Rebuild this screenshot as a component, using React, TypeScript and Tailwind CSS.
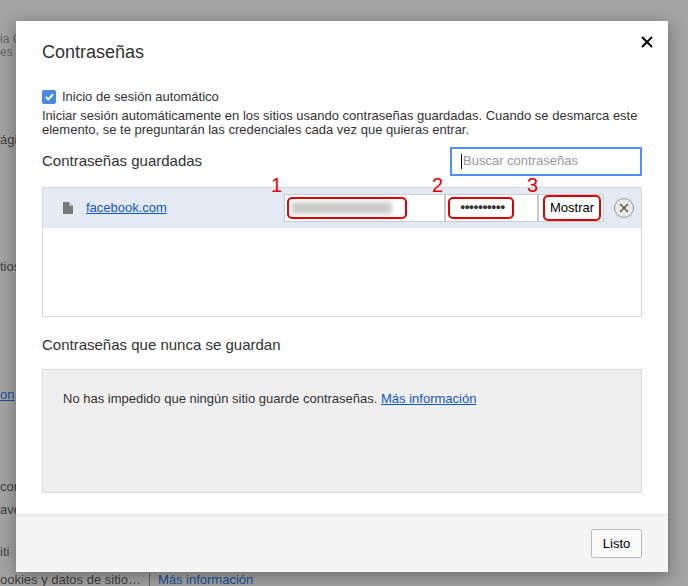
import { X } from "lucide-react";

export default function App() {
  return (
    <div className="relative h-[586px] w-[688px] overflow-hidden bg-[#a3a3a3] text-[13px] text-[#333]" style={{ fontFamily: '"Liberation Sans", Arial, sans-serif' }}>
      {/* page text behind the overlay */}
      <div className="absolute left-0 top-[33px] text-[#333]/60 leading-[13px] text-[12px]">ia C<br />es r</div>
      <div className="absolute left-0 top-[130px] text-[#222]/80">ági</div>
      <div className="absolute left-0 top-[257px] text-[#222]/80">tios</div>
      <div className="absolute left-0 top-[385px] text-[#1a4f9a] underline">on</div>
      <div className="absolute left-0 top-[477px] text-[#222]/80">cor</div>
      <div className="absolute left-0 top-[500px] text-[#222]/80">ave</div>
      <div className="absolute left-0 top-[542px] text-[#222]/80">iti</div>
      <div className="absolute left-0 top-[573px] flex gap-2 leading-[13px] text-[#222]/80">
        <span>ookies y datos de sitio…</span><span className="border-l border-[#666] pl-2 text-[#1a4f9a]">Más información</span>
      </div>

      <div className="absolute left-4 top-[21px] flex h-[551px] w-[652px] flex-col bg-white shadow-[0_4px_16px_rgba(0,0,0,0.35)]">
        <div className="relative px-[26px] pt-[18px]">
          <h1 className="text-[18px] text-[#333]">Contraseñas</h1>
          <button className="absolute right-[12px] top-[12px] text-black"><X size={18} strokeWidth={2.5} /></button>
        </div>
        <div className="px-[26px] pt-[21px]">
          <label className="flex items-center gap-[6px]">
            <span className="flex h-[14px] w-[14px] items-center justify-center rounded-[2px] bg-[#4a8be0]">
              <svg viewBox="0 0 12 12" className="h-[11px] w-[11px]"><path d="M2 6.5l2.7 2.7L10 3.5" fill="none" stroke="white" strokeWidth="2" /></svg>
            </span>
            <span>Inicio de sesión automático</span>
          </label>
          <p className="mt-[2px] leading-[14px]">Iniciar sesión automáticamente en los sitios usando contraseñas guardadas. Cuando se desmarca este elemento, se te preguntarán las credenciales cada vez que quieras entrar.</p>
          <div className="mt-[10px] flex items-center justify-between">
            <h2 className="text-[15px]">Contraseñas guardadas</h2>
            <div className="flex h-[29px] w-[192px] items-center border-2 border-[#4d90fe] px-[9px] text-[#999]">
              <span className="mr-[1px] h-[15px] w-px bg-black" />Buscar contraseñas
            </div>
          </div>
          <div className="mt-[11px] h-[130px] border border-[#d9d9d9]">
            <div className="relative flex h-[40px] items-center bg-[#e3eaf4]">
              <svg viewBox="0 0 10 12" className="ml-[20px] h-[12px] w-[10px]"><path d="M0 0h6l4 4v8H0z" fill="#777" /><path d="M6 0v4h4" fill="#bbb" /></svg>
              <a className="ml-[13px] text-[#1155cc] underline">facebook.com</a>
              <div className="ml-auto flex h-[28px] items-center">
                <div className="relative h-[28px] w-[161px] border border-[#ccc] bg-white">
                  <div className="absolute left-[2px] top-[2px] h-[22px] w-[120px] rounded-[5px] border-2 border-[#e00000] bg-white">
                    <div className="m-[3px] h-[12px] w-[100px] bg-[#ccc] blur-[2px]" />
                  </div>
                  <span className="absolute -left-[14px] -top-[25px] text-[20px] text-[#e00000]">1</span>
                </div>
                <div className="relative h-[28px] w-[93px] border border-[#ccc] bg-white">
                  <div className="absolute left-[2px] top-[2px] flex h-[22px] w-[66px] items-center rounded-[5px] border-2 border-[#e00000] pl-[10px] text-[9px] tracking-[-1px]">●●●●●●●●●●</div>
                  <span className="absolute -left-[14px] -top-[25px] text-[20px] text-[#e00000]">2</span>
                </div>
                <div className="relative flex h-[28px] w-[66px] items-center border border-[#ccc] bg-white">
                  <div className="ml-[4px] flex h-[26px] w-[58px] items-center justify-center rounded-[5px] border-2 border-[#e00000] text-black">Mostrar</div>
                  <span className="absolute -left-[12px] -top-[25px] text-[20px] text-[#e00000]">3</span>
                </div>
              </div>
              <div className="ml-[10px] mr-[7px] flex h-[20px] w-[20px] items-center justify-center rounded-full border border-[#999] bg-[#e8e8e8] text-[#555]">
                <X size={14} strokeWidth={2.5} />
              </div>
            </div>
          </div>
          <h2 className="mt-[17px] text-[15px]">Contraseñas que nunca se guardan</h2>
          <div className="mt-[13px] h-[124px] border border-[#d9d9d9] bg-[#efefef] px-[20px] pt-[19px]">
            No has impedido que ningún sitio guarde contraseñas. <a className="text-[#1155cc] underline">Más información</a>
          </div>
        </div>
        <div className="mt-[21px] flex flex-1 items-start justify-end border-t border-[#e5e5e5] bg-[#f5f5f5] px-[26px] pt-[14px]">
          <button className="h-[29px] w-[51px] rounded-[2px] border border-[#bbb] bg-[#fafafa] text-black">Listo</button>
        </div>
      </div>
    </div>
  );
}
